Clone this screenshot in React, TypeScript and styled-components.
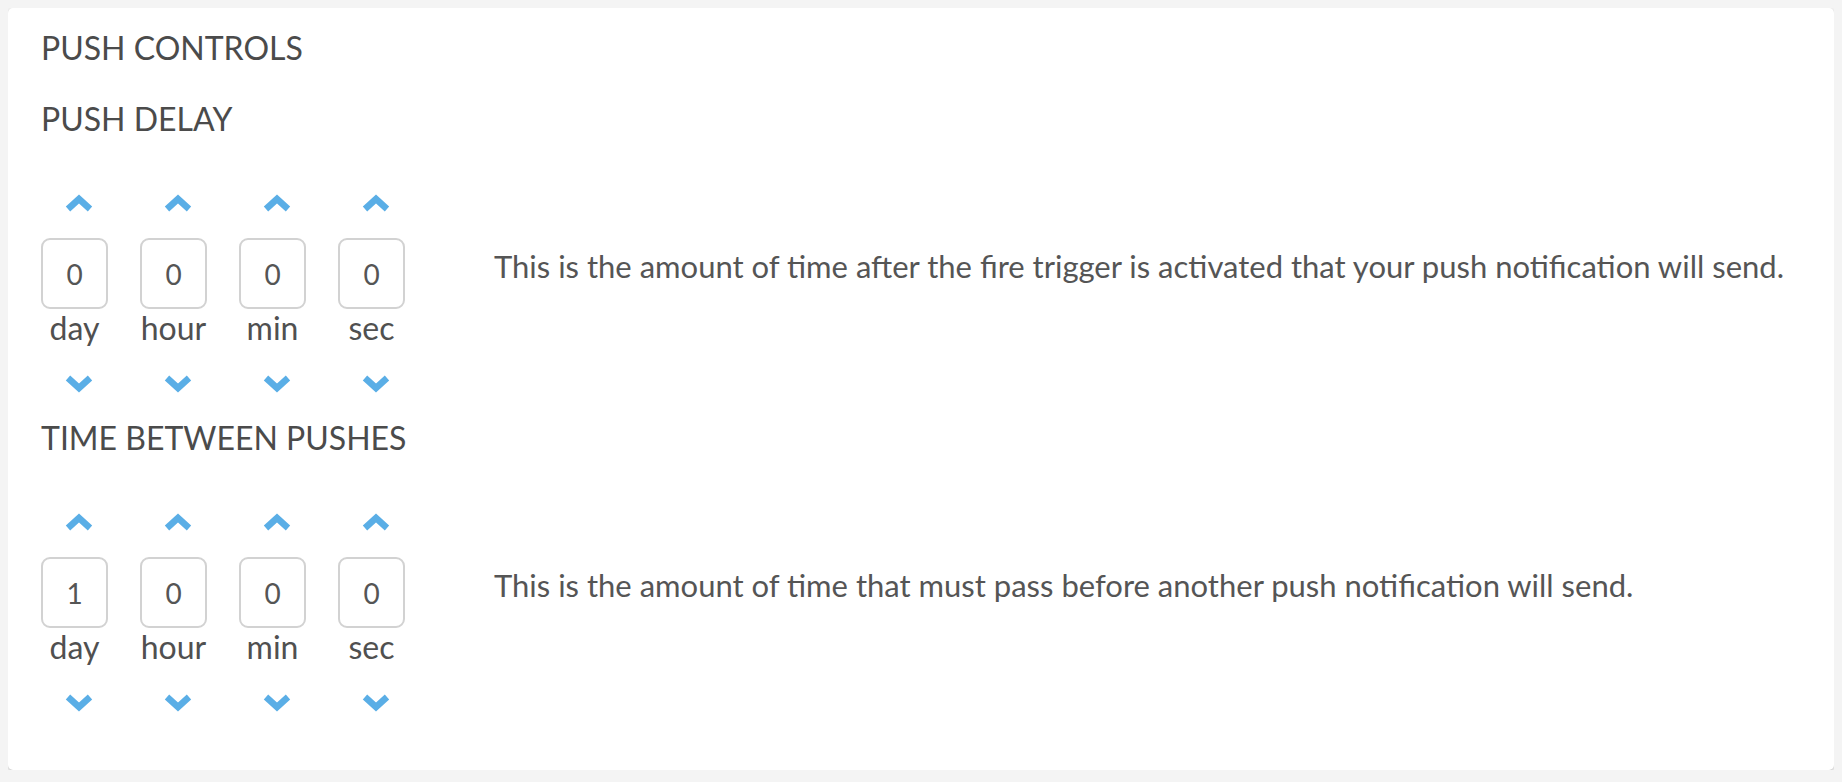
import { FC } from "react";
import styled, { createGlobalStyle } from "styled-components";

type Unit = {
  label: string
  value: number
}

type TimeControlProps = {
  title: string
  units: Array<Unit>
  description: string
}

const GlobalStyle = createGlobalStyle`
  body {
    margin: 8px;
    background: #f4f4f4;
    font-family: Lato, "Open Sans", sans-serif;
    color: #555;
  }
`

const Card = styled.div`
  background: #fff;
  border-radius: 5px;
  box-shadow: 0 1px 3px rgba(0, 0, 0, 0.22);
  height: 762px;
  box-sizing: border-box;
  padding: 21px 32px 0 33px;
`

const Heading = styled.h2`
  margin: 0;
  font-size: 32px;
  line-height: 38px;
  font-weight: 400;
  color: #4b4b4b;
`

const Section = styled.div`
  margin-top: 33px;

  & + & {
    margin-top: 24px;
  }
`

const Row = styled.div`
  display: flex;
  align-items: flex-start;
  padding-top: 54px;
`

const Spinners = styled.div`
  display: flex;
  gap: 32px;
`

const Spinner = styled.div`
  display: flex;
  flex-direction: column;
  align-items: center;
  width: 67px;
`

const Arrow = styled.button`
  display: block;
  border: none;
  background: none;
  padding: 0;
  margin: 0 0 0 9px;
  height: 20px;
  cursor: pointer;
  color: #5aaee6;
`

const ValueBox = styled.div`
  width: 67px;
  height: 71px;
  box-sizing: border-box;
  margin-top: 26px;
  border: 2px solid #d2d2d2;
  border-radius: 9px;
  display: flex;
  align-items: center;
  justify-content: center;
  font-size: 28px;
  color: #555;
`

const UnitLabel = styled.div`
  font-size: 32px;
  line-height: 38px;
  color: #505050;
  margin-bottom: 28px;
`

const Description = styled.p`
  margin: 56px 0 0 89px;
  font-size: 31px;
  line-height: 37px;
  color: #555;
`

const Chevron: FC<{ up?: boolean }> = ({ up }) => (
  <svg width="28" height="20" viewBox="0 0 28 20">
    <polyline
      points={up ? "3,17 14,7 25,17" : "3,3 14,13 25,3"}
      fill="none"
      stroke="currentColor"
      strokeWidth="6.5"
    />
  </svg>
)

const TimeControl: FC<TimeControlProps> = props => {
  const { title, units, description } = props

  return (
    <Section>
      <Heading>{title}</Heading>
      <Row>
        <Spinners>
          {units.map(u => (
            <Spinner key={u.label}>
              <Arrow><Chevron up /></Arrow>
              <ValueBox>{u.value}</ValueBox>
              <UnitLabel>{u.label}</UnitLabel>
              <Arrow><Chevron /></Arrow>
            </Spinner>
          ))}
        </Spinners>
        <Description>{description}</Description>
      </Row>
    </Section>
  )
}

const App: FC = () => {
  return (
    <>
      <GlobalStyle />
      <Card>
        <Heading>PUSH CONTROLS</Heading>
        <TimeControl
          title="PUSH DELAY"
          units={[
            { label: "day", value: 0 },
            { label: "hour", value: 0 },
            { label: "min", value: 0 },
            { label: "sec", value: 0 },
          ]}
          description="This is the amount of time after the fire trigger is activated that your push notification will send."
        />
        <TimeControl
          title="TIME BETWEEN PUSHES"
          units={[
            { label: "day", value: 1 },
            { label: "hour", value: 0 },
            { label: "min", value: 0 },
            { label: "sec", value: 0 },
          ]}
          description="This is the amount of time that must pass before another push notification will send."
        />
      </Card>
    </>
  )
}

export default App;
